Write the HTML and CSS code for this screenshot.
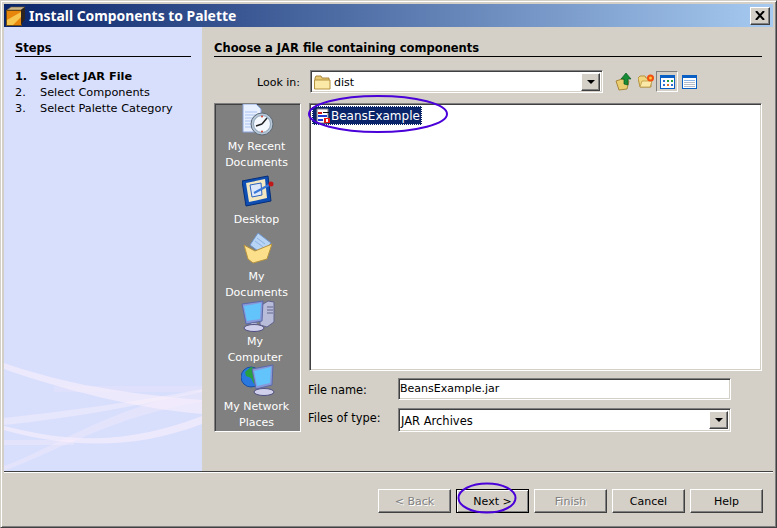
FILE: index.html
```html
<!DOCTYPE html>
<html lang="en">
<head>
<meta charset="utf-8">
<title>Install Components to Palette</title>
<link rel="stylesheet" href="styles.css">
</head>
<body>
<div class="window">
  <header class="titlebar">
    <svg class="app-icon" width="20" height="20" viewBox="0 0 20 20"><path d="M1 4L5 1h14l-4 3z" fill="#cdb88e" stroke="#6e5a38" stroke-width=".6"/><rect x=".5" y="4.500" width="15" height="15" fill="#e8860c" stroke="#6e4a14"/><path d="M15 4l4-3v12l-4 6z" fill="#2e2420"/><path d="M1 14L15 6v5L7 19H1z" fill="#f7c64e"/></svg>
    <span class="title">Install Components to Palette</span>
    <button class="close" type="button"><svg width="10" height="9" viewBox="0 0 10 9"><path d="M1 0l8 9M9 0l-8 9" stroke="#000" stroke-width="2" fill="none"/></svg></button>
  </header>
  <div class="main">
    <aside class="sidebar">
      <svg class="waves" width="198" height="111" viewBox="0 0 198 111">
        <path d="M0 3C50 20 100 32 198 40V54C130 48 60 30 0 9z" fill="#fdf0fb" opacity=".55"/>
        <path d="M0 58C70 50 130 42 198 29V32C130 46 70 58 0 65z" fill="#fdf0fb" opacity=".4"/>
        <path d="M0 106C50 88 100 50 198 30V42C110 56 60 88 0 111z" fill="#fdf0fb" opacity=".3"/>
        <path d="M0 66C50 78 110 90 198 56V64C120 94 50 84 0 70z" fill="#fdf0fb" opacity=".55"/>
        <path d="M0 80H70V85H0z" fill="#fdf0fb" opacity=".3"/>
        <path d="M50 26H198V32H50z" fill="#fdf0fb" opacity=".18"/>
      </svg>
      <h2 class="heading">Steps</h2>
      <ol class="steps">
        <li class="step step-current"><span class="step-num">1.</span>Select JAR File</li>
        <li class="step"><span class="step-num">2.</span>Select Components</li>
        <li class="step"><span class="step-num">3.</span>Select Palette Category</li>
      </ol>
    </aside>
    <section class="content">
      <h2 class="heading">Choose a JAR file containing components</h2>
      <div class="lookin-row">
        <label class="lookin-label">Look in:</label>
        <div class="combo combo-lookin">
          <svg width="17" height="16" viewBox="0 0 17 16"><path d="M1 4l1-2h5l1 2h7v3H1z" fill="#e8c870" stroke="#a8873c"/><path d="M.5 15V6h15.500v9z" fill="#fbe9a8" stroke="#b4923f"/></svg>
          <span class="combo-text">dist</span>
          <span class="combo-arrow"><i class="tri"></i></span>
        </div>
        <div class="tools">
          <svg width="17" height="19" viewBox="0 0 17 19"><path d="M1 9l6-2 7 2-2 8-8 1z" fill="#e9cd6e" stroke="#a8873c"/><path d="M9 12V7H6l5-6 5 6h-3v6z" fill="#178a35" stroke="#0b5a1f" stroke-width=".7"/></svg>
          <svg class="tool-new" width="16" height="15" viewBox="0 0 16 15"><path d="M0 4l2-2h5l1 2h5v9H2z" fill="#f0d67e" stroke="#b4923f"/><path d="M2 13l2-6h10l-2 6z" fill="#fbe9a8" stroke="#b4923f" stroke-width=".7"/><circle cx="12.500" cy="4" r="3.500" fill="#f2500f"/><circle cx="12.500" cy="4" r="1.500" fill="#ffc23a"/></svg>
          <span class="tool-toggle"><svg width="15" height="14" viewBox="0 0 15 14"><rect x=".5" y=".5" width="14" height="13" fill="#fff" stroke="#0a5fc4"/><rect x="1" y="1" width="13" height="2" fill="#0a5fc4"/><path d="M3 5h2v2H3zM3 9h2v2H3z" fill="#2f6fd0"/><path d="M7 5h2v2H7z" fill="#20a040"/><path d="M7 9h2v2H7z" fill="#e07030"/><path d="M11 5h2v2h-2z" fill="#20a040"/><path d="M11 9h2v2h-2z" fill="#2f6fd0"/></svg></span>
          <svg width="15" height="14" viewBox="0 0 15 14"><rect x=".5" y=".5" width="14" height="13" fill="#fff" stroke="#0a5fc4"/><rect x="1" y="1" width="13" height="2" fill="#0a5fc4"/><path d="M2 5h11v1H2z" fill="#8ab4e8"/><path d="M2 7h11v1H2zM2 9h11v1H2zM2 11h11v1H2z" fill="#b5bcc8"/></svg>
        </div>
      </div>
      <div class="chooser">
        <nav class="places">
          <div class="place place-recent">
            <svg width="32" height="32" viewBox="0 0 32 32"><path d="M1 0h13l5 5v23H1z" fill="#e8f0ff" stroke="#8ca4dc"/><path d="M3 8h12M3 11h12M3 14h10M3 17h8M3 20h8M3 23h9" stroke="#a8c0ee"/><circle cx="20" cy="20" r="11" fill="#b8c8d8" stroke="#5c6874"/><circle cx="20" cy="20" r="8.500" fill="#f4f8ff" stroke="#8fa4b8"/><path d="M20 20l-6 2M20 20l5-6" stroke="#222" stroke-width="1.500"/><circle cx="20" cy="12.500" r="1" fill="#d04030"/><circle cx="20" cy="27.500" r="1" fill="#d04030"/></svg>
            <span>My Recent Documents</span>
          </div>
          <div class="place place-desktop">
            <svg width="32" height="32" viewBox="0 0 32 32"><path d="M0 6l26-5 3 25-25 5z" fill="#0f4fb4" stroke="#062e78"/><path d="M4 8l19-4 2 19-18 4z" fill="#f4e8c0"/><path d="M8 10l11-2 1 12-10 2z" fill="#dce8fa" stroke="#2a62c0"/><path d="M12 18l15-8" stroke="#3a78d8" stroke-width="2"/><circle cx="29" cy="9" r="2.500" fill="#c01818"/></svg>
            <span>Desktop</span>
          </div>
          <div class="place place-docs">
            <svg width="32" height="32" viewBox="0 0 32 32"><path d="M16 1l13 10-9 11-12-9z" fill="#b8d4f4" stroke="#6e94c8"/><path d="M15 6l8 6M13 9l8 6" stroke="#8cb0e0"/><path d="M2 13l11 6 17-7-5 15-14 4-5-4z" fill="#fbdf8a" stroke="#b4923f"/></svg>
            <span>My Documents</span>
          </div>
          <div class="place place-computer">
            <svg width="34" height="32" viewBox="0 0 34 32"><path d="M19 6l8-5 6 1v20l-7 5-7-2z" fill="#b8bcd8" stroke="#60648c"/><path d="M26 7h6M26 10h6M26 13h6" stroke="#60648c"/><path d="M1 4l21-3-1 20-16 3z" fill="#8898d8" stroke="#5a68a8"/><path d="M3 6l17-3-1 16-13 2z" fill="#62c4fb"/><path d="M10 23h6v5h-6z" fill="#d0d0ec" stroke="#70749c" stroke-width=".6"/><ellipse cx="13" cy="28" rx="10" ry="3.500" fill="#d0d0ec" stroke="#505080"/></svg>
            <span>My Computer</span>
          </div>
          <div class="place place-network">
            <svg width="34" height="32" viewBox="0 0 34 32"><circle cx="10" cy="13" r="10" fill="#2878e0" stroke="#1a4ea0"/><path d="M4 8l6-5 6 2-2 5 3 5-4 5-3-6-5-2z" fill="#28a040"/><path d="M11 5l21-4-1 20-16 4z" fill="#8898d8" stroke="#5a68a8"/><path d="M13 7l17-4-1 16-13 3z" fill="#62c4fb"/><path d="M20 24h6v4h-6z" fill="#d0d0ec" stroke="#70749c" stroke-width=".6"/><ellipse cx="23" cy="28" rx="10" ry="3.500" fill="#d0d0ec" stroke="#505080"/></svg>
            <span>My Network Places</span>
          </div>
        </nav>
        <div class="browser">
          <div class="filelist">
            <div class="file">
              <svg width="16" height="16" viewBox="0 0 16 16"><path d="M2 1h11v14H2z" fill="#fff" stroke="#808080"/><path d="M3 4h4v2H3z" fill="#d01818"/><path d="M8 4h6v1H8z" fill="#111"/><path d="M3 7h9v2H3zM3 11h5v2H3z" fill="#1a3ad0"/><path d="M9 10h6v5H9z" fill="#e01818"/><path d="M11 11h2v3h-2z" fill="#fff"/></svg>
              <span class="file-name">BeansExample</span>
            </div>
          </div>
          <div class="form">
            <div class="form-row form-row-name">
              <label class="form-label">File name:</label>
              <div class="field">BeansExample.jar</div>
            </div>
            <div class="form-row form-row-type">
              <label class="form-label form-label-type">Files of type:</label>
              <div class="combo combo-type">
                <span class="combo-text">JAR Archives</span>
                <span class="combo-arrow"><i class="tri"></i></span>
              </div>
            </div>
          </div>
        </div>
      </div>
    </section>
  </div>
  <div class="separator"></div>
  <footer class="footer">
    <button class="btn" type="button" disabled>&lt; Back</button>
    <button class="btn btn-default" type="button">Next &gt;</button>
    <button class="btn" type="button" disabled>Finish</button>
    <button class="btn" type="button">Cancel</button>
    <button class="btn" type="button">Help</button>
  </footer>
  <svg class="marks" width="777" height="528" viewBox="0 0 777 528">
    <ellipse cx="378" cy="114" rx="69" ry="18" />
    <ellipse cx="487" cy="498" rx="28.500" ry="14.500" />
  </svg>
</div>
</body>
</html>
```

FILE: styles.css
```css
* { box-sizing: border-box; }
html, body { margin: 0; padding: 0; }
body {
  width: 777px;
  height: 528px;
  overflow: hidden;
  font-family: "DejaVu Sans", sans-serif;
  font-size: 11px;
  color: #000;
}
.window {
  position: relative;
  width: 777px;
  height: 528px;
  padding: 3px;
  display: flex;
  flex-direction: column;
  background: #d4d0c8;
  border: 1px solid;
  border-color: #d4d0c8 #404040 #404040 #d4d0c8;
  box-shadow: inset 1px 1px 0 #fff, inset -1px -1px 0 #808080;
}
.titlebar {
  height: 23px;
  flex: none;
  display: flex;
  align-items: center;
  padding: 0 3px 0 2px;
  background: linear-gradient(90deg, #0a246a, #a6caf0);
}
.app-icon { flex: none; margin-right: 3px; }
.title {
  flex: 1;
  color: #fff;
  font-family: "Noto Sans", sans-serif;
  font-weight: bold;
  font-size: 13.900px;
}
.close {
  width: 20px;
  height: 18px;
  padding: 0;
  display: flex;
  align-items: center;
  justify-content: center;
  background: #d4d0c8;
  border: 1px solid;
  border-color: #fff #404040 #404040 #fff;
  box-shadow: inset -1px -1px 0 #808080;
}
.main { flex: none; height: 444px; display: flex; }
.sidebar {
  position: relative;
  width: 198px;
  flex: none;
  padding: 14px 11px 0;
  background: #d8dffd;
}
.waves { position: absolute; left: 0; bottom: 0; }
.heading {
  position: relative;
  margin: 0;
  height: 16px;
  line-height: 15px;
  font-size: 11.500px;
  font-weight: bold;
  border-bottom: 1px solid #000;
}
.steps { position: relative; margin: 12px 0 0; padding: 0; list-style: none; font-size: 11.300px; }
.step { height: 16px; line-height: 16px; display: flex; }
.step-current { font-weight: bold; }
.step-num { width: 25px; flex: none; }
.content { flex: 1; padding: 14px 11px 0 12px; }
.lookin-row { display: flex; align-items: center; margin-top: 13px; height: 23px; }
.lookin-label { width: 86px; flex: none; text-align: right; padding-top: 2px; }
.combo {
  display: flex;
  align-items: center;
  background: #fff;
  border: 1px solid;
  border-color: #808080 #fff #fff #808080;
  box-shadow: inset 1px 1px 0 #404040, inset -1px -1px 0 #d4d0c8;
}
.combo-lookin { width: 293px; height: 23px; margin-left: 10px; padding: 2px 2px 2px 3px; }
.combo-text { flex: 1; margin-left: 3px; padding-top: 2px; }
.combo-type { height: 24px; width: 333px; padding: 2px; }
.combo-type .combo-text { margin-left: 0; font-size: 11.500px; }
.combo-arrow {
  width: 19px;
  height: 18px;
  flex: none;
  display: flex;
  align-items: center;
  justify-content: center;
  background: #d4d0c8;
  border: 1px solid;
  border-color: #fff #404040 #404040 #fff;
  box-shadow: inset -1px -1px 0 #808080;
}
.tri {
  width: 0;
  height: 0;
  border-left: 4px solid transparent;
  border-right: 4px solid transparent;
  border-top: 4px solid #000;
}
.tools { display: flex; align-items: center; margin-left: 12px; }
.tool-new { margin-left: 6px; }
.tool-toggle {
  width: 22px;
  height: 21px;
  margin-left: 2px;
  margin-right: 4px;
  display: flex;
  align-items: center;
  justify-content: center;
  border: 1px solid;
  border-color: #808080 #fff #fff #808080;
}
.chooser { display: flex; margin-top: 10px; }
.places {
  width: 87px;
  height: 329px;
  flex: none;
  overflow: hidden;
  background: #808080;
  color: #fff;
  text-align: center;
  border: 1px solid;
  border-color: #808080 #fff #fff #808080;
  box-shadow: inset 1px 1px 0 #404040;
}
.place { display: flex; flex-direction: column; align-items: center; line-height: 16px; }
.place span { display: block; padding: 0 2px; }
.place svg { flex: none; }
.place-recent { height: 70px; }
.place-recent span { margin-top: 3px; width: 72px; margin-left: -2px; }
.place-desktop { height: 58px; padding-top: 1px; }
.place-desktop span { margin-top: 5px; margin-left: -2px; }
.place-docs { height: 68px; }
.place-docs span { margin-top: 5px; width: 72px; margin-left: -2px; }
.place-computer { height: 64px; }
.place-computer span { margin-top: 2px; width: 66px; margin-right: 5px; }
.place-network span { margin-top: 3px; width: 84px; margin-left: -2px; }
.browser { flex: 1; margin-left: 8px; }
.filelist {
  height: 268px;
  padding: 2px;
  background: #fff;
  border: 1px solid;
  border-color: #808080 #fff #fff #808080;
  box-shadow: inset 1px 1px 0 #404040, inset -1px -1px 0 #d4d0c8;
}
.file {
  width: 110px;
  height: 19px;
  display: flex;
  align-items: center;
  padding-left: 3px;
  background: #0a246a;
  outline: 1px dotted #fff;
  outline-offset: -1px;
  color: #fff;
}
.file-name { font-size: 12px; }
.form-row { display: flex; align-items: center; }
.form-row-name { margin-top: 7px; height: 22px; }
.form-row-type { margin-top: 8px; height: 24px; }
.form-label { width: 89px; flex: none; font-size: 11.400px; margin-left: -1px; margin-right: 1px; padding-top: 1px; }
.form-label-type { align-self: flex-start; padding-top: 3px; }
.field {
  width: 333px;
  height: 22px;
  line-height: 20px;
  padding-left: 1px;
  background: #fff;
  border: 1px solid;
  border-color: #808080 #fff #fff #808080;
  box-shadow: inset 1px 1px 0 #404040, inset -1px -1px 0 #d4d0c8;
}
.separator { height: 2px; flex: none; border-top: 1px solid #404040; border-bottom: 1px solid #fff; }
.footer { flex: 1; display: flex; justify-content: flex-end; gap: 5px; padding: 16px 10px 0 0; }
.btn {
  width: 73px;
  height: 24px;
  padding: 0;
  font: inherit;
  color: #000;
  background: #d4d0c8;
  border: 1px solid;
  border-color: #fff #404040 #404040 #fff;
  box-shadow: inset -1px -1px 0 #808080;
}
.btn:disabled { color: #808080; text-shadow: 1px 1px 0 #fff; }
.btn-default { border: 1px solid #000; box-shadow: inset 1px 1px 0 #fff, inset -1px -1px 0 #808080; }
.marks { position: absolute; left: -1px; top: -1px; pointer-events: none; }
.marks ellipse { fill: none; stroke: #4a00d8; stroke-width: 2; }
```
